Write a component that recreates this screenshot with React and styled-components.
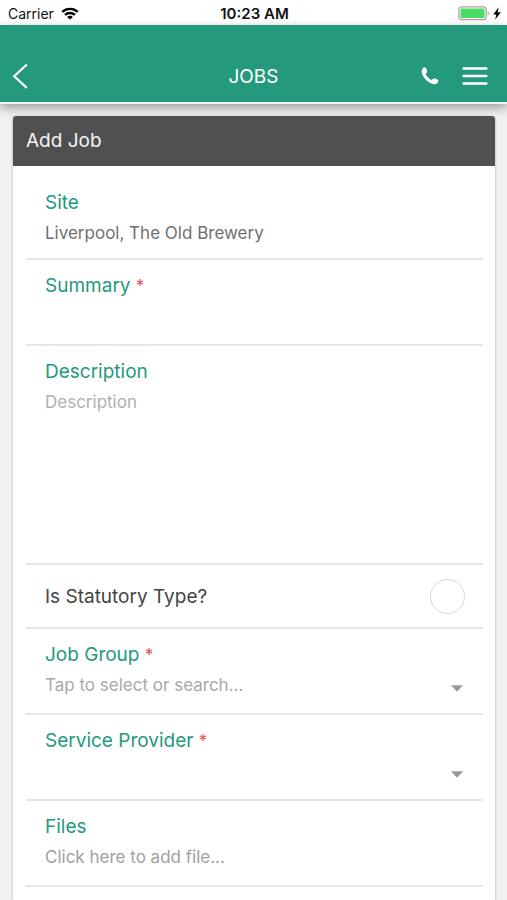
import { useState } from "react";
import styled, { createGlobalStyle } from "styled-components";

export default function App() {
  const [summary, setSummary] = useState("")
  const [description, setDescription] = useState("")
  const [statutory, setStatutory] = useState(false)

  return (
    <PageArea>
      <GlobalStyle />
      <StatusBar>
        <Carrier>
          Carrier
          <WifiIcon />
        </Carrier>
        <Clock>10:23 AM</Clock>
        <Power>
          <BatteryIcon />
          <BoltIcon />
        </Power>
      </StatusBar>

      <Header>
        <HeaderSide>
          <IconButton type="button" aria-label="Back">
            <svg width="16" height="26" viewBox="0 0 16 26" fill="none" stroke="#fff" strokeWidth="2.2">
              <path d="M14.8 1.5 L2.2 13.2 L14.8 24.9" />
            </svg>
          </IconButton>
        </HeaderSide>
        <Title>JOBS</Title>
        <HeaderSide $end>
          <IconButton type="button" aria-label="Call">
            <svg width="18" height="18" viewBox="0 0 18 18" fill="#fff">
              <path d="M1.2 2.6 C1.8 1 3 .2 4.2 .4 C5 .6 5.4 1.6 6 4.1 C6.2 5.2 5.8 5.8 4.9 6.5 C4.6 6.9 4.7 7.3 5.1 8 C6.2 9.8 7.8 11.5 9.9 12.7 C10.5 13.1 10.9 13 11.3 12.5 C12 11.6 12.7 11.2 13.7 11.5 C16.2 12.2 17.3 12.8 17.4 13.6 C17.5 15 16.6 16.3 15 16.9 C13.4 17.5 10.5 16.9 7.7 15.1 C4.3 12.9 1.6 9.4 .8 6.1 C.5 4.8 .7 3.6 1.2 2.6 Z" />
            </svg>
          </IconButton>
          <IconButton type="button" aria-label="Menu">
            <svg width="26" height="20" viewBox="0 0 26 20" fill="none" stroke="#fff" strokeWidth="2.6" strokeLinecap="round">
              <path d="M1.7 2.5 H24.3 M1.7 10 H24.3 M1.7 17.5 H24.3" />
            </svg>
          </IconButton>
        </HeaderSide>
      </Header>

      <Content>
        <Card>
          <CardTitle>Add Job</CardTitle>
          <Form onSubmit={e => e.preventDefault()}>
            <Field $short>
              <Label htmlFor="site">Site</Label>
              <TextInput id="site" readOnly value="Liverpool, The Old Brewery" />
            </Field>
            <Field>
              <Label htmlFor="summary">Summary <Required>*</Required></Label>
              <TextInput id="summary" required value={summary} onChange={e => setSummary(e.target.value)} />
            </Field>
            <Field>
              <Label htmlFor="description">Description</Label>
              <TextArea
                id="description"
                placeholder="Description"
                value={description}
                onChange={e => setDescription(e.target.value)}
              />
            </Field>
            <CheckField>
              <CheckLabel htmlFor="statutory">Is Statutory Type?</CheckLabel>
              <Check
                id="statutory"
                type="checkbox"
                checked={statutory}
                onChange={e => setStatutory(e.target.checked)}
              />
            </CheckField>
            <Field>
              <Label htmlFor="group">Job Group <Required>*</Required></Label>
              <SelectField id="group" placeholder="Tap to select or search..." />
            </Field>
            <Field>
              <Label htmlFor="provider">Service Provider <Required>*</Required></Label>
              <SelectField id="provider" placeholder="" />
            </Field>
            <Field>
              <Label htmlFor="files">Files</Label>
              <FileButton id="files" type="button">Click here to add file...</FileButton>
            </Field>
          </Form>
        </Card>
      </Content>
    </PageArea>
  );
}

function SelectField({ id, placeholder }) {
  return (
    <SelectRow>
      <Select id={id} required defaultValue="">
        <option value="">{placeholder}</option>
      </Select>
      <Arrow width="12" height="7" viewBox="0 0 12 7">
        <path d="M0 .3 H12 L6 6.7 Z" />
      </Arrow>
    </SelectRow>
  )
}

function WifiIcon() {
  return (
    <svg width="18" height="13" viewBox="0 0 18 13" fill="none" stroke="#000" strokeWidth="2.4">
      <path d="M1.2 4.9 C5.6 .8 12.4 .8 16.8 4.9" />
      <path d="M4 7.9 C6.8 5.3 11.2 5.3 14 7.9" />
      <path d="M9 12.6 L6.1 9.9 C7.7 8.4 10.3 8.4 11.9 9.9 Z" fill="#000" stroke="none" />
    </svg>
  )
}

function BatteryIcon() {
  return (
    <svg width="32" height="15" viewBox="0 0 32 15">
      <rect x=".8" y=".8" width="27.4" height="12.9" rx="3" fill="#fff" stroke="#a5a5a5" strokeWidth="1.3" />
      <rect x="2.5" y="2.5" width="24" height="9.5" rx="1.2" fill="#4cd964" />
      <path d="M29.7 5 C31.5 5.7 31.5 8.8 29.7 9.5 Z" fill="#a5a5a5" />
    </svg>
  )
}

function BoltIcon() {
  return (
    <svg width="8" height="13" viewBox="0 0 8 13">
      <path d="M5.7 .3 L.2 7.4 H3.3 L2.2 12.7 L7.8 5.2 H4.6 Z" fill="#000" />
    </svg>
  )
}

const GlobalStyle = createGlobalStyle`
  * {
    box-sizing: border-box;
  }
  body {
    margin: 0;
    background-color: #f1f1f1;
    font-family: Inter, "Liberation Sans", sans-serif;
  }
  button, input, select, textarea {
    font-family: inherit;
    margin: 0;
    padding: 0;
    border: 0;
    border-radius: 0;
    background: none;
    appearance: none;
  }
  svg {
    display: block;
    flex-shrink: 0;
  }
`
const PageArea = styled.div`
  min-height: 100vh;
  display: flex;
  flex-direction: column;
`
const StatusBar = styled.div`
  height: 25px;
  padding: 2px 6px 0 8px;
  display: grid;
  grid-template-columns: 1fr auto 1fr;
  align-items: center;
  background-color: #fff;
  color: #111;
  font-size: 14px;
  line-height: 20px;
`
const Carrier = styled.div`
  display: flex;
  align-items: center;
  gap: 7px;
`
const Clock = styled.time`
  font-size: 15px;
  font-weight: 600;
`
const Power = styled.div`
  display: flex;
  align-items: center;
  justify-content: flex-end;
  gap: 3px;
`
const Header = styled.header`
  height: 79px;
  padding: 24px 12px 0;
  display: grid;
  grid-template-columns: 1fr auto 1fr;
  align-items: center;
  background-color: #24997d;
  border-bottom: 2px solid #f4fbf9;
  box-shadow: 0 4px 10px rgba(0, 0, 0, 0.35);
`
const HeaderSide = styled.div`
  display: flex;
  align-items: center;
  justify-content: ${props => props.$end ? "flex-end" : "flex-start"};
  gap: 23px;
  padding-right: ${props => props.$end ? 7 : 0}px;
`
const IconButton = styled.button`
  display: flex;
  cursor: pointer;
`
const Title = styled.h1`
  margin: 0;
  padding-top: 2px;
  color: #fff;
  font-size: 19px;
  font-weight: 400;
  line-height: 26px;
`
const Content = styled.main`
  flex: 1;
  display: flex;
  flex-direction: column;
  padding: 12px 12px 0 13px;
`
const Card = styled.section`
  flex: 1;
  background-color: #fff;
  border-radius: 3px 3px 0 0;
  box-shadow: 0 1px 3px rgba(0, 0, 0, 0.3);
`
const CardTitle = styled.h2`
  margin: 0;
  padding: 12px 13px;
  border-radius: 3px 3px 0 0;
  background-color: #505050;
  color: #f4f4f4;
  font-size: 19px;
  font-weight: 400;
  line-height: 26px;
`
const Form = styled.form`
  padding: 11px 12px 0 13px;
`
const Field = styled.div`
  display: flex;
  flex-direction: column;
  gap: 1px;
  padding: 13px 20px ${props => props.$short ? 9 : 12}px 19px;
  border-bottom: 2px solid #e6e6e6;
`
const Label = styled.label`
  color: #24997d;
  font-size: 19px;
  line-height: 26px;
`
const Required = styled.span`
  color: #e0524d;
  font-size: 17px;
`
const TextInput = styled.input`
  width: 100%;
  height: 32px;
  color: #707070;
  font-size: 17px;
  outline: none;
`
const TextArea = styled.textarea`
  width: 100%;
  height: 165px;
  color: #707070;
  font-size: 17px;
  line-height: 32px;
  resize: none;
  outline: none;

  &::placeholder {
    color: #b0b0b0;
  }
`
const CheckField = styled.div`
  display: flex;
  align-items: center;
  justify-content: space-between;
  height: 64px;
  padding: 0 18px 0 19px;
  border-bottom: 2px solid #e6e6e6;
`
const CheckLabel = styled.label`
  padding-top: 2px;
  color: #444;
  font-size: 19px;
  line-height: 26px;
`
const Check = styled.input`
  width: 35px;
  height: 35px;
  border: 1px solid #d8d8d8;
  border-radius: 50%;

  &:checked {
    background-color: #24997d;
  }
`
const SelectRow = styled.div`
  display: flex;
  align-items: center;
`
const Select = styled.select`
  flex: 1;
  min-width: 0;
  height: 32px;
  color: #a8a8a8;
  font-size: 17px;
  outline: none;
`
const Arrow = styled.svg`
  margin-top: 6px;
  fill: #999;
`
const FileButton = styled.button`
  height: 32px;
  color: #a0a0a0;
  font-size: 17px;
  text-align: left;
  cursor: pointer;
`
